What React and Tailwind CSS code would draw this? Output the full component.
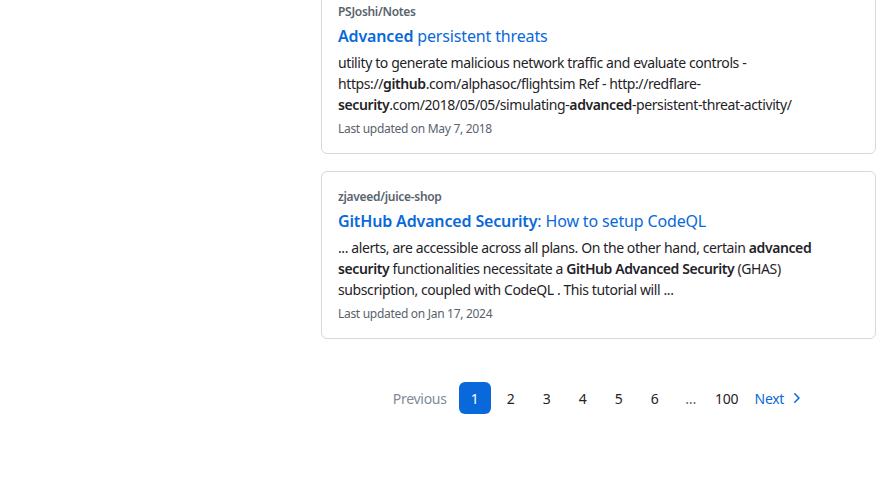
import React from "react";

const font = { fontFamily: '"Noto Sans", sans-serif' };

function Card({ repo, title, children, date, className = "" }) {
  return (
    <div className={"rounded-md border border-[#d1d9e0] px-4 pt-4 pb-[15px] " + className}>
      <div className="text-[12px] leading-[18px] font-semibold text-[#59636e] tracking-[-0.3px]">{repo}</div>
      <div className="mt-[3px] text-[16px] leading-[24px] text-[#0969da] tracking-[-0.15px]">{title}</div>
      <div className="mt-[4px] text-[14px] leading-[21px] text-[#1f2328] tracking-[-0.4px]">{children}</div>
      <div className="mt-[5px] text-[12px] leading-[18px] text-[#59636e] tracking-[-0.3px]">{date}</div>
    </div>
  );
}

export default function App() {
  return (
    <div className="w-[883px] h-[478px] overflow-hidden bg-white flex" style={font}>
      <div className="w-[321px] shrink-0" />
      <div className="w-[555px] shrink-0 -mt-[14px]">
        <Card
          repo="PSJoshi/Notes"
          title={<><span className="font-semibold">Advanced</span> persistent threats</>}
          date="Last updated on May 7, 2018"
        >
          utility to generate malicious network traffic and evaluate controls - https://<b className="font-semibold">github</b>.com/alphasoc/flightsim Ref - http://redflare-<b className="font-semibold">security</b>.com/2018/05/05/simulating-<b className="font-semibold">advanced</b>-persistent-threat-activity/
        </Card>
        <Card
          className="mt-[17px]"
          repo="zjaveed/juice-shop"
          title={<><span className="font-semibold">GitHub Advanced Security</span>: How to setup CodeQL</>}
          date="Last updated on Jan 17, 2024"
        >
          ... alerts, are accessible across all plans. On the other hand, certain <b className="font-semibold">advanced security</b> functionalities necessitate a <b className="font-semibold">GitHub Advanced Security</b> (GHAS) subscription, coupled with CodeQL . This tutorial will ...
        </Card>
        <nav className="mt-[43px] flex items-center justify-center gap-1 text-[14px] text-[#1f2328] tracking-[-0.3px]">
          <span className="h-8 px-2 flex items-center text-[#818b98]">Previous</span>
          <span className="h-8 min-w-8 rounded-md bg-[#0969da] text-white flex items-center justify-center">1</span>
          {["2", "3", "4", "5", "6"].map((n) => (
            <span key={n} className="h-8 min-w-8 flex items-center justify-center">{n}</span>
          ))}
          <span className="h-8 min-w-8 flex items-center justify-center text-[#59636e]">…</span>
          <span className="h-8 min-w-8 px-1 flex items-center justify-center">100</span>
          <span className="h-8 px-2 flex items-center gap-1 text-[#0969da]">
            Next
            <svg width="16" height="16" viewBox="0 0 16 16" fill="currentColor">
              <path d="M6.22 3.22a.75.75 0 0 1 1.06 0l4.25 4.25a.75.75 0 0 1 0 1.06l-4.25 4.25a.751.751 0 0 1-1.042-.018.751.751 0 0 1-.018-1.042L9.94 8 6.22 4.28a.75.75 0 0 1 0-1.06Z" />
            </svg>
          </span>
        </nav>
      </div>
    </div>
  );
}
